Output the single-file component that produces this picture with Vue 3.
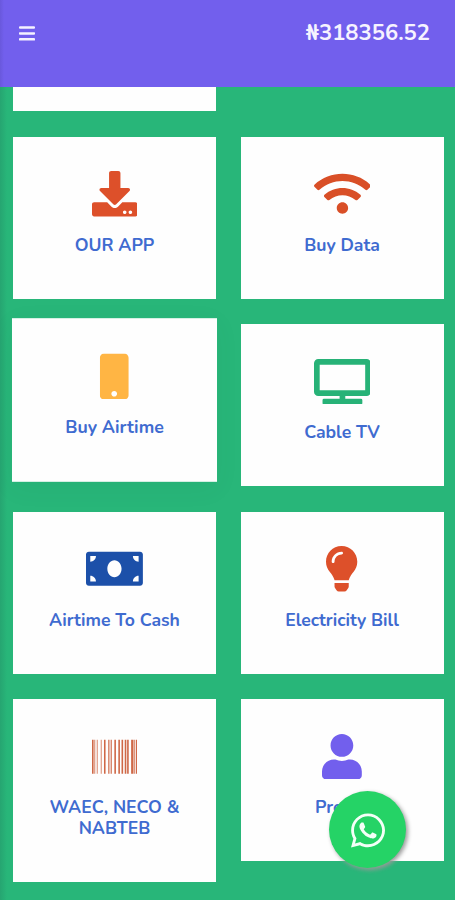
<template>
  <div class="screen">
    <header class="topbar">
      <button class="menu" aria-label="Menu">
        <svg viewBox="0 0 16 15" width="16" height="15">
          <path d="M1 1.5h14M1 7.4h14M1 13.3h14" />
        </svg>
      </button>
      <div class="balance">₦318356.52</div>
    </header>

    <main class="services">
      <div class="card cut"></div>
      <div class="blank"></div>
      <div v-for="item in services" :key="item.id" class="card" :class="[item.id, { active: item.id === active }]"
        @click="active = item.id">
        <svg class="icon" :viewBox="`0 0 ${item.width} 512`" :style="{ width: item.width * iconScale + 'px', color: item.color }">
          <path :d="item.path" />
        </svg>
        <div class="label">{{ item.label }}</div>
      </div>
    </main>

    <button class="whatsapp" aria-label="WhatsApp">
      <svg viewBox="0 0 448 512">
        <path d="M380.9 97.1C339 55.1 283.2 32 223.9 32c-122.4 0-222 99.6-222 222 0 39.1 10.2 77.3 29.6 111L0 480l117.7-30.9c32.4 17.7 68.9 27 106.1 27h.1c122.3 0 224.1-99.6 224.1-222 0-59.3-25.2-115-67.1-157zm-157 341.6c-33.2 0-65.7-8.9-94-25.7l-6.7-4-69.8 18.3L72 359.2l-4.4-7c-18.5-29.4-28.2-63.3-28.2-98.2 0-101.7 82.8-184.5 184.6-184.5 49.3 0 95.6 19.2 130.4 54.1 34.8 34.9 56.2 81.2 56.1 130.5 0 101.8-84.9 184.6-186.6 184.6zm101.2-138.2c-5.5-2.8-32.8-16.2-37.9-18-5.1-1.9-8.8-2.8-12.5 2.8-3.7 5.6-14.3 18-17.6 21.8-3.2 3.7-6.5 4.2-12 1.4-32.6-16.3-54-29.1-75.5-66-5.7-9.8 5.7-9.1 16.3-30.3 1.8-3.7.9-6.9-.5-9.7-1.4-2.8-12.5-30.1-17.1-41.2-4.5-10.8-9.1-9.3-12.5-9.5-3.2-.2-6.9-.2-10.6-.2-3.7 0-9.7 1.4-14.8 6.9-5.1 5.6-19.4 19-19.4 46.3 0 27.3 19.9 53.7 22.6 57.4 2.8 3.7 39.1 59.7 94.8 83.8 35.2 15.2 49 16.5 66.6 13.9 10.7-1.6 32.8-13.4 37.4-26.4 4.6-13 4.6-24.1 3.2-26.4-1.3-2.5-5-3.9-10.5-6.6z" />
      </svg>
    </button>
  </div>
</template>

<script setup>
import { ref } from 'vue';

const iconScale = 45.5 / 512;
const active = ref('airtime');

const services = [
  {
    id: 'app', label: 'OUR APP', color: '#dd502a', width: 512,
    path: 'M216 0h80c13.3 0 24 10.7 24 24v168h87.7c17.8 0 26.7 21.5 14.1 34.1L269.7 378.3c-7.5 7.5-19.8 7.5-27.3 0L90.1 226.1c-12.6-12.6-3.7-34.1 14.1-34.1H192V24c0-13.3 10.7-24 24-24zm296 376v112c0 13.3-10.7 24-24 24H24c-13.3 0-24-10.7-24-24V376c0-13.3 10.7-24 24-24h146.7l49 49c20.1 20.1 52.5 20.1 72.6 0l49-49H488c13.3 0 24 10.7 24 24zm-124 88c0-11-9-20-20-20s-20 9-20 20 9 20 20 20 20-9 20-20zm64 0c0-11-9-20-20-20s-20 9-20 20 9 20 20 20 20-9 20-20z'
  },
  {
    id: 'data', label: 'Buy Data', color: '#d94f27', width: 640,
    path: 'M634.91 154.88C457.74-8.99 182.19-8.93 5.09 154.88c-6.66 6.16-6.79 16.59-.35 22.98l34.24 33.97c6.14 6.1 16.02 6.23 22.4.38 145.92-133.68 371.3-133.71 517.25 0 6.38 5.85 16.26 5.71 22.4-.38l34.24-33.97c6.43-6.39 6.3-16.82-.36-22.98zM320 352c-35.35 0-64 28.65-64 64s28.65 64 64 64 64-28.65 64-64-28.65-64-64-64zm202.67-83.59c-115.26-101.93-290.21-101.82-405.34 0-6.9 6.1-7.12 16.69-.57 23.15l34.44 33.99c6 5.92 15.66 6.32 22.05.8 83.95-72.57 209.74-72.41 293.49 0 6.39 5.52 16.05 5.13 22.05-.8l34.44-33.99c6.56-6.46 6.33-17.06-.56-23.15z'
  },
  {
    id: 'airtime', label: 'Buy Airtime', color: '#ffb544', width: 320,
    path: 'M272 0H48C21.5 0 0 21.5 0 48v416c0 26.5 21.5 48 48 48h224c26.5 0 48-21.5 48-48V48c0-26.5-21.5-48-48-48zM160 480c-17.7 0-32-14.3-32-32s14.3-32 32-32 32 14.3 32 32-14.3 32-32 32z'
  },
  {
    id: 'cable', label: 'Cable TV', color: '#27b277', width: 640,
    path: 'M592 0H48A48 48 0 0 0 0 48v320a48 48 0 0 0 48 48h240v32H112a16 16 0 0 0-16 16v32a16 16 0 0 0 16 16h416a16 16 0 0 0 16-16v-32a16 16 0 0 0-16-16H352v-32h240a48 48 0 0 0 48-48V48a48 48 0 0 0-48-48zm-16 352H64V64h512z'
  },
  {
    id: 'cash', label: 'Airtime To Cash', color: '#1c50a9', width: 640,
    path: 'M608 64H32C14.33 64 0 78.33 0 96v320c0 17.67 14.33 32 32 32h576c17.67 0 32-14.33 32-32V96c0-17.67-14.33-32-32-32zM48 400v-64c35.35 0 64 28.65 64 64H48zm0-224v-64h64c0 35.35-28.65 64-64 64zm272 176c-44.19 0-80-42.99-80-96 0-53.02 35.82-96 80-96s80 42.98 80 96c0 53.03-35.83 96-80 96zm272 48h-64c0-35.35 28.65-64 64-64v64zm0-224c-35.35 0-64-28.65-64-64h64v64z'
  },
  {
    id: 'electricity', label: 'Electricity Bill', color: '#dd502a', width: 352,
    path: 'M96.06 454.35c.01 6.29 1.87 12.45 5.36 17.69l17.09 25.69a31.99 31.99 0 0 0 26.64 14.28h61.71a31.99 31.99 0 0 0 26.64-14.28l17.09-25.69a31.989 31.989 0 0 0 5.36-17.69l.04-38.35H96.01l.05 38.35zM0 176c0 44.37 16.45 84.85 43.56 115.78 16.52 18.85 42.36 58.23 52.21 91.45.04.26.07.52.11.78h160.24c.04-.26.07-.51.11-.78 9.85-33.22 35.69-72.6 52.21-91.45C335.55 260.85 352 220.37 352 176 352 78.61 272.91-.3 175.45 0 73.44.31 0 82.97 0 176zm176-80c-44.11 0-80 35.89-80 80 0 8.84-7.16 16-16 16s-16-7.16-16-16c0-61.76 50.24-112 112-112 8.84 0 16 7.16 16 16s-7.16 16-16 16z'
  },
  {
    id: 'exams', label: 'WAEC, NECO & NABTEB', color: '#cf6847', width: 512,
    path: 'M0 448V64h18v384H0zm26.857-.273V64H36v383.727h-9.143zm27.143 0V64h8.857v383.727H54zm44.857 0V64h8.857v383.727h-8.857zm36 0V64h17.714v383.727h-17.714zm44.857 0V64h8.857v383.727h-8.857zm18 0V64h8.857v383.727h-8.857zm18 0V64h8.857v383.727h-8.857zm35.715 0V64h18v383.727h-18zm44.857 0V64h18v383.727h-18zm35.999 0V64h18.001v383.727h-18.001zm36.001 0V64h18.001v383.727h-18.001zm26.857 0V64h18v383.727h-18zm45.143 0V64h26.857v383.727h-26.857zm35.714 0V64h9.143v383.727H476zm18 .273V64h18v384h-18z'
  },
  {
    id: 'profile', label: 'Profile', color: '#725fed', width: 448,
    path: 'M224 256c70.7 0 128-57.3 128-128S294.7 0 224 0 96 57.3 96 128s57.3 128 128 128zm89.6 32h-16.7c-22.2 10.2-46.9 16-72.9 16s-50.6-5.8-72.9-16h-16.7C60.2 288 0 348.2 0 422.4V464c0 26.5 21.5 48 48 48h352c26.5 0 48-21.5 48-48v-41.6c0-74.2-60.2-134.4-134.4-134.4z'
  }
];
</script>

<style>
body {
  background: #28b679;
}
</style>

<style scoped>
.screen {
  position: relative;
  height: 900px;
  overflow: hidden;
  background: linear-gradient(90deg, #26a571, #28b679 7px);
  font-family: Nunito, "Open Sans", "Noto Sans", sans-serif;
}

.topbar {
  box-sizing: border-box;
  height: 87px;
  display: flex;
  align-items: flex-start;
  justify-content: space-between;
  padding: 18px 25px 0 19px;
  background: linear-gradient(90deg, #6958dc, #725fed 4px);
}

.menu {
  display: flex;
  padding: 8px 0 0;
  border: none;
  background: transparent;
  cursor: pointer;
}

.menu svg {
  fill: none;
  stroke: #f5f2ff;
  stroke-width: 2.5;
  stroke-linecap: round;
}

.balance {
  font-size: 22px;
  line-height: 31px;
  font-weight: 700;
  color: #f6f3ff;
}

.services {
  display: grid;
  grid-template-columns: 203px 203px;
  column-gap: 24.5px;
  row-gap: 25.5px;
  align-items: start;
  padding-left: 13px;
}

.card {
  box-sizing: border-box;
  min-height: 162px;
  padding: 34.5px 20px 42.5px;
  display: flex;
  flex-direction: column;
  align-items: center;
  background: #fefefe;
  cursor: pointer;
}

.card.cut {
  min-height: 24px;
  height: 24px;
  padding: 0;
}

/* the selected card is lifted a little */
.card.active {
  transform: translateY(-5px) scale(1.01);
  box-shadow: 0 6px 24px rgba(20, 80, 60, 0.06);
}

.icon {
  height: 45.5px;
  fill: currentColor;
  flex: none;
}

.label {
  margin-top: 18px;
  font-size: 17.6px;
  line-height: 21px;
  font-weight: 700;
  text-align: center;
  color: #3f6bd0;
}

.whatsapp {
  position: absolute;
  left: 329px;
  top: 791px;
  width: 77px;
  height: 77px;
  padding: 1px 0 0;
  display: flex;
  align-items: center;
  justify-content: center;
  border: none;
  border-radius: 50%;
  background: #25d366;
  box-shadow: 2px 2px 4px #999;
  cursor: pointer;
}

.whatsapp svg {
  width: 34px;
  height: 39px;
  fill: #f4fff7;
}
</style>
